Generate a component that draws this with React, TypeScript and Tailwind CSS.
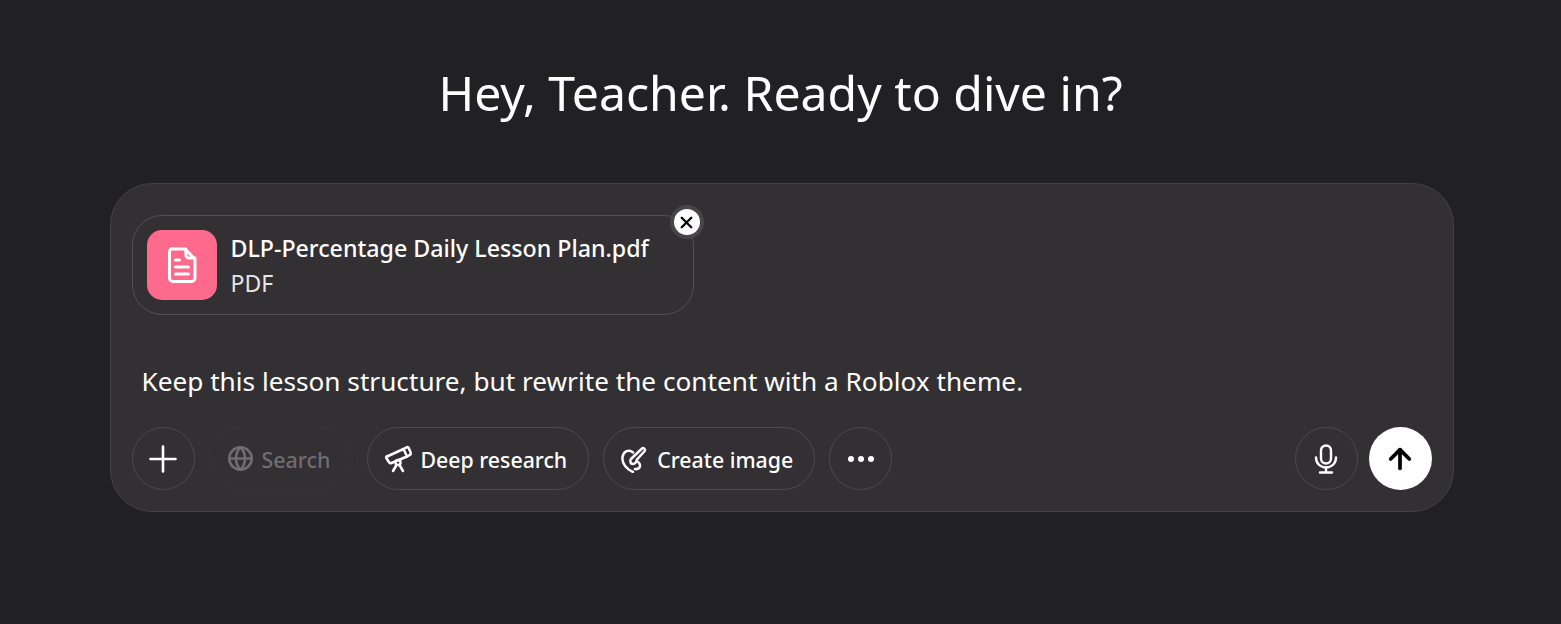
import { ArrowUp, Globe, X } from 'lucide-react';

const font = { fontFamily: '"Noto Sans", sans-serif' };

const FileIcon = () => (
  <svg viewBox="0 0 32 40" className="w-[32px] h-[40px]" fill="none" stroke="#fff" strokeWidth="3" strokeLinecap="round" strokeLinejoin="round">
    <path d="M7 4h12l10 10v19a3.500 3.500 0 0 1-3.500 3.500h-18.500a3.500 3.500 0 0 1-3.500-3.500v-26a3.500 3.500 0 0 1 3.500-3.500z" />
    <path d="M20 4v6a3 3 0 0 0 3 3h6" />
    <path d="M9.500 15h4M9.500 22h13M9.500 29h13" />
  </svg>
);

const TelescopeIcon = () => (
  <svg viewBox="0 0 28 28" className="w-[28px] h-[28px]" fill="none" stroke="#fff" strokeWidth="2.500" strokeLinecap="round" strokeLinejoin="round">
    <path d="M3 11.500l16.500-7.500 3.500 7.500-15.500 6.500a2 2 0 0 1-2.600-1l-2.400-3.700a1.500 1.500 0 0 1 0.500-2.300z" />
    <path d="M19.500 4l3.200-1.700a1.500 1.500 0 0 1 2 0.700l2 4.800a1.500 1.500 0 0 1-0.800 2l-2.900 1.700" />
    <circle cx="14" cy="17.500" r="2.500" />
    <path d="M12.500 20l-3.500 6M15.500 20l3.500 6" />
  </svg>
);

const BrushIcon = () => (
  <svg viewBox="0 0 28 28" className="w-[28px] h-[28px]" fill="none" stroke="#fff" strokeWidth="2.500" strokeLinecap="round" strokeLinejoin="round">
    <path d="M13 7.500C9 4 3.500 6 2.500 12c-1 6.500 4.500 12.500 10.500 15" />
    <path d="M11.500 13.500l10.500-10c1.500-1.300 3.800 0.800 2.700 2.500l-7.700 8.500" />
    <path d="M11.500 13.500c-2 1.500-1.500 5.500 1.500 5.500 2.500 0 3.500-2.500 4-4.500" />
    <path d="M17.500 16.500c2.500 1.500 3.500 4.500 1.500 6.500-1 1-2.500 1.300-4 1" />
  </svg>
);

const PlusIcon = () => (
  <svg viewBox="0 0 28 28" className="w-[28px] h-[28px]" fill="none" stroke="#fff" strokeWidth="2.600" strokeLinecap="round">
    <path d="M1.500 14h25M14 1.500v25" />
  </svg>
);

const MicIcon = () => (
  <svg viewBox="0 0 24 30" className="w-[24px] h-[30px]" fill="none" stroke="#fff" strokeWidth="2.400" strokeLinecap="round" strokeLinejoin="round">
    <rect x="7" y="1.500" width="10" height="18" rx="5" />
    <path d="M2 13.500c0 6 4.500 10 10 10s10-4 10-10" />
    <path d="M12 23.500v5M6 28.500h12" />
  </svg>
);

const Dots = () => (
  <div className="flex items-center gap-[4px]">
    <span className="w-[6px] h-[6px] rounded-full bg-white" />
    <span className="w-[6px] h-[6px] rounded-full bg-white" />
    <span className="w-[6px] h-[6px] rounded-full bg-white" />
  </div>
);

const Pill = ({ icon, label }: { icon: React.ReactNode; label: string }) => (
  <button className="flex items-center gap-[9px] h-[63px] pl-[16px] pr-[21px] rounded-full border border-[#4c4a4f] text-white text-[21.3px] font-medium">
    {icon}
    <span className="pt-[3px]">{label}</span>
  </button>
);

export default function App() {
  return (
    <div className="w-[1561px] h-[624px] bg-[#212023] overflow-hidden flex flex-col items-center pl-[2px]" style={font}>
      <h1 className="mt-[58px] mr-[2px] h-[70px] leading-[70px] text-[48.15px] font-normal text-white">Hey, Teacher. Ready to dive in?</h1>

      <div className="mt-[55px] w-[1344px] h-[329px] rounded-[42px] bg-[#323033] border border-[#434146] pt-[31px] px-[21px] flex flex-col">
        <div className="relative w-[562px] h-[100px] rounded-[30px] border border-[#525055] flex items-center gap-[14px] pl-[14px]">
          <div className="w-[70px] h-[70px] rounded-[15px] bg-[#fd6a8b] flex items-center justify-center">
            <FileIcon />
          </div>
          <div className="flex flex-col gap-[3px]">
            <span className="text-[23.2px] leading-[32px] font-medium text-white">DLP-Percentage Daily Lesson Plan.pdf</span>
            <span className="text-[23px] leading-[32px] text-[#e6e6e8]">PDF</span>
          </div>
          <button className="absolute -top-[11px] -right-[11px] w-[34px] h-[34px] rounded-full bg-white border-[4px] border-[#47454a] flex items-center justify-center">
            <X size={19} strokeWidth={3} color="#000" />
          </button>
        </div>

        <p className="mt-[48px] ml-[10px] text-[26.2px] leading-[36px] text-white">Keep this lesson structure, but rewrite the content with a Roblox theme.</p>

        <div className="mt-[28px] flex items-center">
          <button className="w-[63px] h-[63px] rounded-full border border-[#4c4a4f] flex items-center justify-center">
            <PlusIcon />
          </button>
          <div className="ml-[14px] pl-[17px] flex items-center gap-[8px] h-[63px] w-[144px] rounded-full border border-[#363438] text-[#6f6d72] text-[21.4px] font-medium">
            <Globe size={27} strokeWidth={2.3} />
            <span className="pt-[3px]">Search</span>
          </div>
          <div className="ml-[14px] flex items-center gap-[14px]">
            <Pill icon={<TelescopeIcon />} label="Deep research" />
            <Pill icon={<BrushIcon />} label="Create image" />
            <button className="w-[63px] h-[63px] rounded-full border border-[#4c4a4f] flex items-center justify-center">
              <Dots />
            </button>
          </div>
          <div className="ml-auto flex items-center gap-[11px]">
            <button className="w-[63px] h-[63px] rounded-full border border-[#4c4a4f] flex items-center justify-center">
              <MicIcon />
            </button>
            <button className="w-[63px] h-[63px] rounded-full bg-white flex items-center justify-center">
              <ArrowUp size={32} strokeWidth={2.8} color="#000" />
            </button>
          </div>
        </div>
      </div>
    </div>
  );
}
